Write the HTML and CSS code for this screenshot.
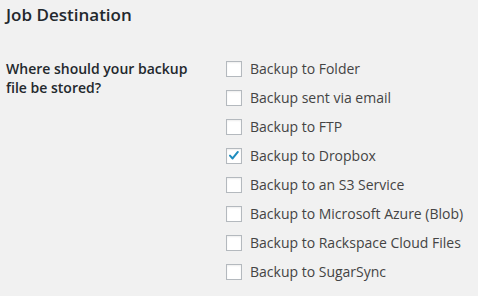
FILE: index.html
```html
<!doctype html>
<html>
<head>
    <meta charset="utf-8">
    <title>Job Destination</title>
    <link rel="stylesheet" href="styles.css">
</head>
<body>
<div class="wrap">
    <h3 class="title">Job Destination</h3>
    <div class="form-row">
        <div class="row-label">Where should your backup file be stored?</div>
        <fieldset class="dest-list">
            <label class="dest"><span class="box"></span>Backup to Folder</label>
            <label class="dest"><span class="box"></span>Backup sent via email</label>
            <label class="dest"><span class="box"></span>Backup to FTP</label>
            <label class="dest"><span class="box checked"><svg viewBox="0 0 16 16" width="16" height="16"><path d="M3.4 7.6 L6.4 10.8 L12.4 3.4" fill="none" stroke="#1e8cbe" stroke-width="2.3" stroke-linecap="round" stroke-linejoin="round"/></svg></span>Backup to Dropbox</label>
            <label class="dest"><span class="box"></span>Backup to an S3 Service</label>
            <label class="dest"><span class="box"></span>Backup to Microsoft Azure (Blob)</label>
            <label class="dest"><span class="box"></span>Backup to Rackspace Cloud Files</label>
            <label class="dest"><span class="box"></span>Backup to SugarSync</label>
        </fieldset>
    </div>
</div>
</body>
</html>
```

FILE: styles.css
```css
* {
    margin: 0;
    padding: 0;
    box-sizing: border-box;
}

body {
    background: #f1f1f1;
    color: #23282d;
    font-family: "Open Sans", "Liberation Sans", sans-serif;
    font-size: 14px;
}

.wrap {
    padding: 3px 6px 0;
}

.title {
    font-size: 17px;
    font-weight: 600;
    line-height: 24px;
}

.form-row {
    display: flex;
    margin-top: 27px;
}

.row-label {
    width: 220px;
    padding-right: 20px;
    padding-top: 5px;
    font-weight: 600;
    line-height: 19px;
}

.dest-list {
    border: 0;
    display: flex;
    flex-direction: column;
}

.dest {
    display: flex;
    align-items: center;
    height: 29px;
    color: #444;
}

.box {
    width: 16px;
    height: 16px;
    margin-right: 8px;
    background: #fff;
    border: 1px solid #b4b9be;
    box-shadow: inset 0 1px 2px rgba(0, 0, 0, .07);
    display: flex;
    align-items: center;
    justify-content: center;
}

.box svg {
    display: block;
}
```
